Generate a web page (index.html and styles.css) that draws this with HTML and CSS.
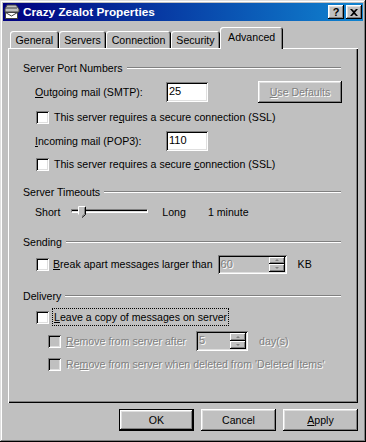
FILE: index.html
```html
<!DOCTYPE html>
<html lang="en">
<head>
    <meta charset="UTF-8">
    <title>Crazy Zealot Properties</title>
    <link rel="stylesheet" href="styles.css">
</head>
<body>

<div class="window">
    <div class="titlebar">
        <svg class="title-icon" width="16" height="16" viewBox="0 0 16 16">
            <polygon points="3,1 12,1 15,5 15,8 1,8 1,5" fill="#c0c0c0" stroke="#404040" stroke-width="1"/>
            <rect x="2" y="3" width="11" height="2" fill="#808080"/>
            <rect x="1.5" y="8.5" width="12" height="6" fill="#fff" stroke="#404040" stroke-width="1"/>
            <polyline points="1.5,8.5 7.5,12 13.5,8.5" fill="none" stroke="#404040" stroke-width="1"/>
        </svg>
        <span class="title">Crazy Zealot Properties</span>
        <span class="title-btn help">?</span>
        <span class="title-btn">
            <svg width="8" height="7" viewBox="0 0 8 7">
                <path d="M0 0 L2 0 L4 2 L6 0 L8 0 L5 3.5 L8 7 L6 7 L4 5 L2 7 L0 7 L3 3.5 Z" fill="#000"/>
            </svg>
        </span>
    </div>

    <div class="dialog">
        <div class="tabs">
            <div class="tab">General</div>
            <div class="tab">Servers</div>
            <div class="tab">Connection</div>
            <div class="tab">Security</div>
            <div class="tab active">Advanced</div>
        </div>

        <div class="panel">
            <!-- Server Port Numbers -->
            <div class="group-head first"><span>Server Port Numbers</span><span class="rule"></span></div>
            <div class="row port-row">
                <label class="port-label"><u>O</u>utgoing mail (SMTP):</label>
                <div class="field">25</div>
                <div class="button disabled defaults"><span><u>U</u>se Defaults</span></div>
            </div>
            <div class="row check-row cb1">
                <span class="checkbox"></span>
                <span class="check-text">This server re<u>q</u>uires a secure connection (SSL)</span>
            </div>
            <div class="row port-row incoming">
                <label class="port-label"><u>I</u>ncoming mail (POP3):</label>
                <div class="field">110</div>
            </div>
            <div class="row check-row cb2">
                <span class="checkbox"></span>
                <span class="check-text">This server requires a secure <u>c</u>onnection (SSL)</span>
            </div>

            <!-- Server Timeouts -->
            <div class="group-head h2"><span>Server Timeouts</span><span class="rule"></span></div>
            <div class="row slider-row">
                <span>Short</span>
                <div class="slider">
                    <div class="track"></div>
                    <svg class="thumb" width="9" height="12" viewBox="0 0 9 12">
                        <path d="M0.5 0.5 H7.5 V8.5 L4 11.5 L0.5 8.5 Z" fill="#c0c0c0"/>
                        <path d="M7.5 0.5 V8.5 L4 11.5" fill="none" stroke="#000"/>
                        <path d="M0.5 8.5 V0.5 H7.5" fill="none" stroke="#fff"/>
                        <path d="M6.5 1.5 V8 L4 10.3" fill="none" stroke="#808080"/>
                    </svg>
                </div>
                <span class="long">Long</span>
                <span class="minute">1 minute</span>
            </div>

            <!-- Sending -->
            <div class="group-head h3"><span>Sending</span><span class="rule"></span></div>
            <div class="row check-row break-row">
                <span class="checkbox"></span>
                <span class="check-text tight"><u>B</u>reak apart messages larger than</span>
                <div class="spin wide">
                    <span class="spin-value">60</span>
                    <div class="spin-btns">
                        <span class="spin-btn"><i class="arrow up"></i></span>
                        <span class="spin-btn"><i class="arrow down"></i></span>
                    </div>
                </div>
                <span class="unit">KB</span>
            </div>

            <!-- Delivery -->
            <div class="group-head h4"><span>Delivery</span><span class="rule"></span></div>
            <div class="row check-row leave-row">
                <span class="checkbox"></span>
                <span class="check-text focus"><u>L</u>eave a copy of messages on server</span>
            </div>
            <div class="row check-row sub after-row">
                <span class="checkbox off"></span>
                <span class="check-text grey"><u>R</u>emove from server after</span>
                <div class="spin narrow">
                    <span class="spin-value">5</span>
                    <div class="spin-btns">
                        <span class="spin-btn"><i class="arrow up"></i></span>
                        <span class="spin-btn"><i class="arrow down"></i></span>
                    </div>
                </div>
                <span class="unit grey days">day(s)</span>
            </div>
            <div class="row check-row sub deleted-row">
                <span class="checkbox off"></span>
                <span class="check-text grey">Re<u>m</u>ove from server when deleted from 'Deleted Items'</span>
            </div>
        </div>

        <div class="actions">
            <div class="button default">OK</div>
            <div class="button">Cancel</div>
            <div class="button"><span><u>A</u>pply</span></div>
        </div>
    </div>
</div>

</body>
</html>
```

FILE: styles.css
```css
* {
    box-sizing: border-box;
}
body {
    margin: 0;
    background-color: #c0c0c0;
    font-family: "Liberation Sans", Arial, sans-serif;
    font-size: 10.6px;
    color: #000;
}
u {
    text-decoration: underline;
    text-underline-offset: 1px;
}
.window {
    width: 366px;
    height: 442px;
    padding: 3px;
    background-color: #c0c0c0;
    box-shadow: inset -1px -1px #000, inset 1px 1px #dfdfdf, inset -2px -2px #808080, inset 2px 2px #fff;
    display: flex;
    flex-direction: column;
}
.titlebar {
    height: 18px;
    display: flex;
    align-items: center;
    padding: 0 1px 0 1px;
    background: linear-gradient(to right, #000080, #1084d0);
    color: #fff;
}
.title-icon {
    margin-right: 3px;
}
.title {
    flex: 1;
    font-weight: bold;
    font-size: 11.8px;
}
.title-btn {
    width: 16px;
    height: 14px;
    display: flex;
    align-items: center;
    justify-content: center;
    background-color: #c0c0c0;
    color: #000;
    font-weight: bold;
    font-size: 11px;
    box-shadow: inset -1px -1px #000, inset 1px 1px #fff, inset -2px -2px #808080, inset 2px 2px #dfdfdf;
}
.title-btn.help {
    margin-right: 2px;
}
.dialog {
    flex: 1;
    display: flex;
    flex-direction: column;
    padding: 6px 5px 0 5px;
}
.tabs {
    display: flex;
    align-items: flex-end;
    height: 21px;
    padding-left: 2px;
}
.tab {
    height: 17px;
    padding: 0 5.5px;
    display: flex;
    align-items: center;
    border-radius: 3px 3px 0 0;
    background-color: #c0c0c0;
    box-shadow: inset 1px 1px #fff, inset -1px 0 #000, inset -2px 0 #808080;
}
.tab.active {
    position: relative;
    z-index: 1;
    height: 22px;
    margin-bottom: -1px;
    padding: 0 8px 3px 8px;
}
.panel {
    height: 355px;
    padding: 12px 17px 0 15px;
    box-shadow: inset 1px 1px #fff, inset -1px -1px #000, inset -2px -2px #808080;
}
.group-head {
    display: flex;
    align-items: center;
    height: 16px;
}
.rule {
    flex: 1;
    height: 2px;
    margin-left: 4px;
    border-top: 1px solid #808080;
    border-bottom: 1px solid #fff;
}
.group-head.h2 { margin-top: 12px; }
.group-head.h3 { margin-top: 12px; }
.group-head.h4 { margin-top: 14px; }

.row {
    display: flex;
    align-items: center;
}
.port-row {
    height: 24px;
    margin-top: 4px;
    padding-left: 12px;
}
.port-row.incoming {
    height: 22px;
    margin-top: 5px;
}
.port-label {
    width: 131px;
}
.field {
    width: 42px;
    height: 20px;
    padding: 3px 0 0 3px;
    background-color: #fff;
    box-shadow: inset 1px 1px #808080, inset -1px -1px #fff, inset 2px 2px #000, inset -2px -2px #dfdfdf;
    font-size: 11px;
}
.button {
    width: 75px;
    height: 22px;
    display: flex;
    align-items: center;
    justify-content: center;
    background-color: #c0c0c0;
    box-shadow: inset -1px -1px #000, inset 1px 1px #fff, inset -2px -2px #808080, inset 2px 2px #dfdfdf;
}
.button.default {
    box-shadow: inset 0 0 0 1px #000, inset -2px -2px #000, inset 2px 2px #fff, inset -3px -3px #808080, inset 3px 3px #dfdfdf;
}
.button.defaults {
    width: 84px;
    margin-left: auto;
    margin-right: -1px;
}
.button.disabled,
.grey {
    color: #808080;
    text-shadow: 1px 1px #fff;
}
.check-row {
    height: 16px;
    padding-left: 13px;
}
.cb1 { margin-top: 5px; }
.cb2 { margin-top: 4px; }
.checkbox {
    width: 13px;
    height: 13px;
    flex: none;
    background-color: #fff;
    box-shadow: inset 1px 1px #808080, inset -1px -1px #fff, inset 2px 2px #000, inset -2px -2px #dfdfdf;
}
.checkbox.off {
    background-color: #c0c0c0;
}
.check-text {
    margin-left: 5px;
}
.check-text.tight {
    margin-left: 4px;
}
.check-text.focus {
    margin-left: 3px;
    height: 18px;
    padding: 0 1px;
    display: flex;
    align-items: center;
    border: 1px dotted #000;
}
.slider-row {
    height: 20px;
    margin-top: 2px;
    padding-left: 12px;
}
.slider {
    position: relative;
    width: 77px;
    height: 20px;
    margin-left: 11px;
}
.track {
    margin-top: 7px;
    height: 4px;
    border-top: 1px solid #808080;
    border-left: 1px solid #808080;
    border-bottom: 1px solid #fff;
    border-right: 1px solid #fff;
    background-color: #000;
    box-shadow: inset 0 -1px #dfdfdf;
}
.thumb {
    position: absolute;
    left: 7px;
    top: 4px;
}
.long {
    margin-left: 14px;
}
.minute {
    margin-left: 22px;
}
.break-row {
    height: 20px;
    margin-top: 4px;
}
.spin {
    height: 19px;
    display: flex;
    padding: 2px;
    background-color: #c0c0c0;
    box-shadow: inset 1px 1px #808080, inset -1px -1px #fff, inset 2px 2px #000, inset -2px -2px #dfdfdf;
}
.spin.wide {
    width: 69px;
    margin-left: 5px;
}
.spin.narrow {
    width: 52px;
    height: 20px;
    margin-left: 10px;
}
.spin-value {
    flex: 1;
    padding: 1px 0 0 1px;
    font-size: 11px;
    color: #808080;
    text-shadow: 1px 1px #fff;
}
.spin-btns {
    width: 16px;
    display: flex;
    flex-direction: column;
}
.spin-btn {
    flex: 1;
    display: flex;
    align-items: center;
    justify-content: center;
    box-shadow: inset -1px -1px #000, inset 1px 1px #fff, inset -2px -2px #808080;
}
.arrow {
    width: 0;
    height: 0;
    border-left: 2px solid transparent;
    border-right: 2px solid transparent;
}
.arrow.up {
    border-bottom: 2px solid #808080;
}
.arrow.down {
    border-top: 2px solid #808080;
}
.unit {
    margin-left: 11px;
}
.leave-row {
    height: 20px;
    margin-top: 3px;
}
.sub {
    padding-left: 25px;
}
.after-row {
    height: 20px;
    margin-top: 4px;
}
.deleted-row {
    margin-top: 5px;
}
.actions {
    display: flex;
    justify-content: flex-end;
    gap: 7px;
    margin-top: 6px;
}
```
